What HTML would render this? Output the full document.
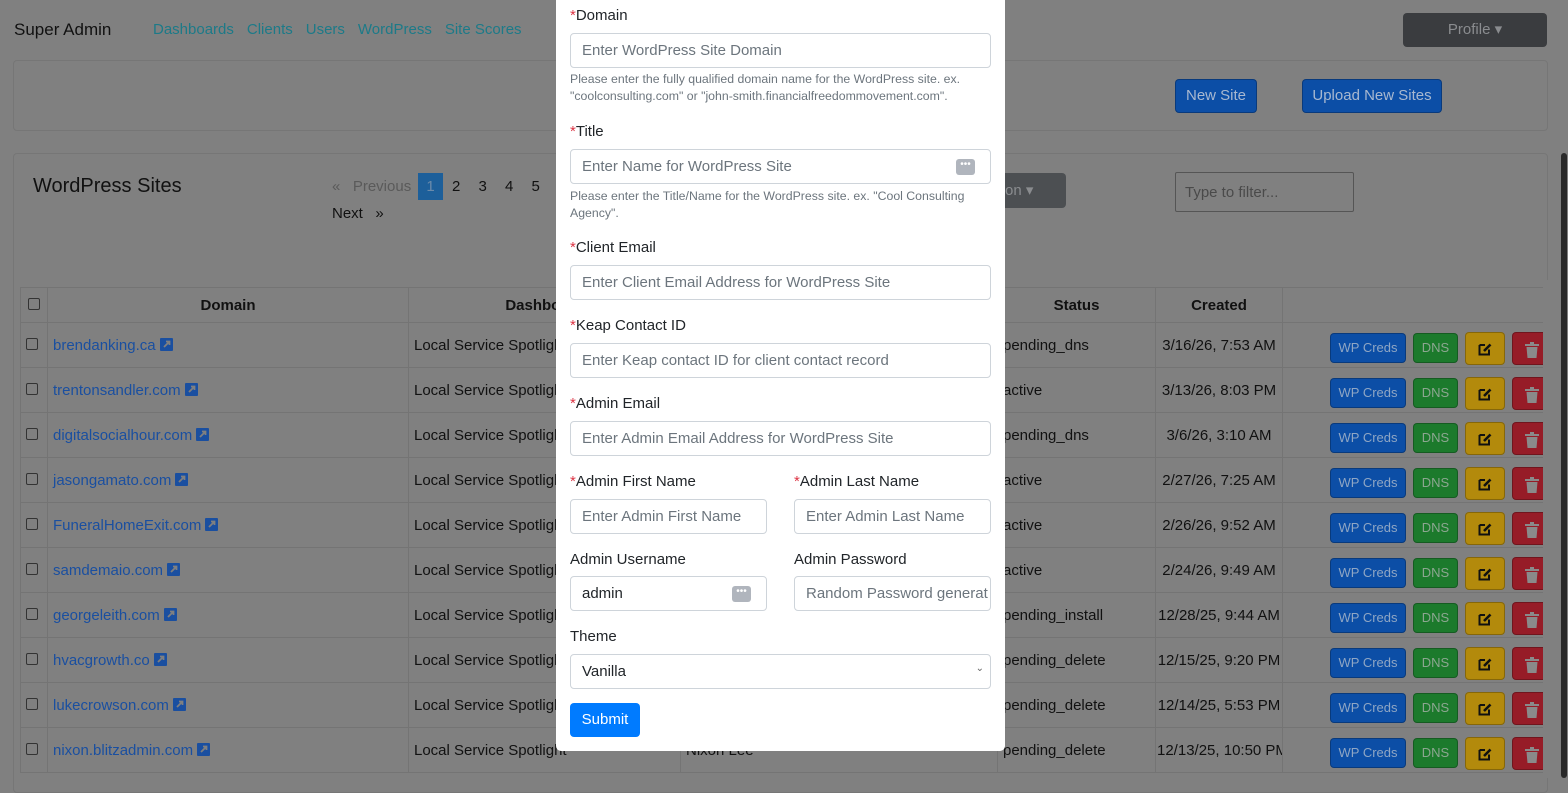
<!DOCTYPE html>
<html><head><meta charset="utf-8"><style>
*{box-sizing:border-box;margin:0;padding:0}
body{width:1568px;height:778px;overflow:hidden;background:#808080;font-family:"Liberation Sans",sans-serif;color:#111;position:relative;font-size:15px}
.a{position:absolute}
.nav a{color:#1c7a88;text-decoration:none;margin-right:13px;font-size:15px}
.box{position:absolute;border:1px solid #767676;border-radius:4px}
.btn{position:absolute;border-radius:4px;color:#8fa6c4;font-size:13px;text-align:center;border:1px solid rgba(0,0,0,.25)}
.b1{background:#0c4ea6;font-size:15px;color:#a8b8d0}
table{position:absolute;left:20px;top:287px;border-collapse:collapse;font-size:15px;table-layout:fixed;width:1523px}
td,th{border:1px solid #747474;height:45px;padding:0 5px;white-space:nowrap;overflow:hidden}
td:nth-child(6){text-align:center;padding:0 1px}
th{height:35px;font-weight:bold}
td.d a{color:#1a4fa0;text-decoration:none}
.ext{display:inline-block;width:13px;height:13px;background:#1a4fa0;vertical-align:-1px;margin-left:4px;position:relative;border-radius:1px}
.ext svg{position:absolute;left:0;top:0}
.cb{display:inline-block;width:12px;height:12px;border:1px solid #333;border-radius:2px}
.act{position:relative;overflow:visible}
.wp{left:47px;top:10px;width:76px;height:30px;line-height:28px;background:#0c4ea6;color:#8fa6c4}
.dn{left:130px;top:10px;width:45px;height:30px;line-height:28px;background:#1c7a2c;color:#8ca690}
.ed{left:182px;top:9px;width:40px;height:33px;background:#b38a0c}
.dl{left:229px;top:9px;width:40px;height:33px;background:#961c27}
.ed svg,.dl svg{position:absolute;left:12px;top:9px}
.modal{position:absolute;left:556px;top:-10px;width:449px;height:761px;background:#fff;border-radius:5px}
.m{position:absolute;color:#212529}
.lbl{font-size:15px}
.req{color:#dc3545}
.inp{position:absolute;border:1px solid #ced4da;border-radius:4px;height:35px;color:#6c757d;font-size:15px;padding:8px 11px;background:#fff}
.hlp{font-size:12.3px;color:#6c757d;line-height:17px;white-space:nowrap}
.key{position:absolute;right:15px;top:9px;width:19px;height:16px;background:#b0b5bd;border-radius:3px;color:#fff;font-size:10px;text-align:center;line-height:12px}
</style></head><body>
<div class="a" style="left:14px;top:20px;font-size:17px;color:#111">Super Admin</div>
<div class="a nav" style="left:153px;top:21px"><a>Dashboards</a><a>Clients</a><a>Users</a><a>WordPress</a><a>Site Scores</a></div>
<div class="a" style="left:1403px;top:13px;width:144px;height:34px;background:#3a3c3f;border-radius:4px;color:#8a8c8f;text-align:center;line-height:34px;font-size:15px">Profile ▾</div>
<div class="box" style="left:13px;top:60px;width:1535px;height:71px"></div>
<div class="btn b1" style="left:1175px;top:79px;width:82px;height:34px;line-height:32px">New Site</div>
<div class="btn b1" style="left:1302px;top:79px;width:140px;height:34px;line-height:32px">Upload New Sites</div>
<div class="box" style="left:13px;top:153px;width:1535px;height:640px"></div>
<div class="a" style="left:33px;top:175px;font-size:20px">WordPress Sites</div>
<div class="a" style="left:332px;top:178px;font-size:15px;color:#5a5a5a">«&nbsp;&nbsp;&nbsp;Previous</div>
<div class="a" style="left:418px;top:173px;width:25px;height:27px;background:#1d5f9a;color:#6a8aaa;text-align:center;line-height:27px">1</div>
<div class="a" style="left:452px;top:178px;word-spacing:14px">2 3 4 5</div>
<div class="a" style="left:332px;top:205px">Next&nbsp;&nbsp;&nbsp;»</div>
<div class="a" style="left:990px;top:173px;width:76px;height:35px;background:#4c4f52;border-radius:4px;color:#8a8c8f;line-height:35px;padding-left:15px">on ▾</div>
<div class="a" style="left:1175px;top:172px;width:179px;height:40px;border:1px solid #555;border-radius:2px;color:#4a4a4a;padding:11px 9px">Type to filter...</div>
<table>
<colgroup><col style="width:27px"><col style="width:361px"><col style="width:272px"><col style="width:317px"><col style="width:158px"><col style="width:127px"><col style="width:261px"></colgroup>
<tr><th><span class="cb"></span></th><th>Domain</th><th>Dashboard</th><th></th><th>Status</th><th>Created</th><th style="border-right:none"></th></tr>
<tr><td><span class="cb"></span></td><td class="d"><a>brendanking.ca</a><span class="ext"><svg width="13" height="13"><path d="M4 9 L9.5 3.5 M6 3.5 H9.5 V7" stroke="#808080" stroke-width="1.8" fill="none"/></svg></span></td><td>Local Service Spotlight</td><td></td><td>pending_dns</td><td>3/16/26, 7:53 AM</td><td class="act"><div class="btn wp">WP Creds</div><div class="btn dn">DNS</div><div class="btn ed"><svg width="15" height="14"><path d="M1.5 3 H7 M1.5 3 V12.5 H11 V7.5" stroke="#111" stroke-width="2" fill="none"/><path d="M6 9 L12.5 2.5" stroke="#111" stroke-width="2.6"/></svg></div><div class="btn dl"><svg width="14" height="16"><rect x="0" y="2" width="14" height="2" fill="#8a8a8a"/><rect x="5" y="0" width="4" height="2" fill="#8a8a8a"/><path d="M1.5 5 H12.5 L11.5 16 H2.5 Z" fill="#8a8a8a"/></svg></div></td></tr>
<tr><td><span class="cb"></span></td><td class="d"><a>trentonsandler.com</a><span class="ext"><svg width="13" height="13"><path d="M4 9 L9.5 3.5 M6 3.5 H9.5 V7" stroke="#808080" stroke-width="1.8" fill="none"/></svg></span></td><td>Local Service Spotlight</td><td></td><td>active</td><td>3/13/26, 8:03 PM</td><td class="act"><div class="btn wp">WP Creds</div><div class="btn dn">DNS</div><div class="btn ed"><svg width="15" height="14"><path d="M1.5 3 H7 M1.5 3 V12.5 H11 V7.5" stroke="#111" stroke-width="2" fill="none"/><path d="M6 9 L12.5 2.5" stroke="#111" stroke-width="2.6"/></svg></div><div class="btn dl"><svg width="14" height="16"><rect x="0" y="2" width="14" height="2" fill="#8a8a8a"/><rect x="5" y="0" width="4" height="2" fill="#8a8a8a"/><path d="M1.5 5 H12.5 L11.5 16 H2.5 Z" fill="#8a8a8a"/></svg></div></td></tr>
<tr><td><span class="cb"></span></td><td class="d"><a>digitalsocialhour.com</a><span class="ext"><svg width="13" height="13"><path d="M4 9 L9.5 3.5 M6 3.5 H9.5 V7" stroke="#808080" stroke-width="1.8" fill="none"/></svg></span></td><td>Local Service Spotlight</td><td></td><td>pending_dns</td><td>3/6/26, 3:10 AM</td><td class="act"><div class="btn wp">WP Creds</div><div class="btn dn">DNS</div><div class="btn ed"><svg width="15" height="14"><path d="M1.5 3 H7 M1.5 3 V12.5 H11 V7.5" stroke="#111" stroke-width="2" fill="none"/><path d="M6 9 L12.5 2.5" stroke="#111" stroke-width="2.6"/></svg></div><div class="btn dl"><svg width="14" height="16"><rect x="0" y="2" width="14" height="2" fill="#8a8a8a"/><rect x="5" y="0" width="4" height="2" fill="#8a8a8a"/><path d="M1.5 5 H12.5 L11.5 16 H2.5 Z" fill="#8a8a8a"/></svg></div></td></tr>
<tr><td><span class="cb"></span></td><td class="d"><a>jasongamato.com</a><span class="ext"><svg width="13" height="13"><path d="M4 9 L9.5 3.5 M6 3.5 H9.5 V7" stroke="#808080" stroke-width="1.8" fill="none"/></svg></span></td><td>Local Service Spotlight</td><td></td><td>active</td><td>2/27/26, 7:25 AM</td><td class="act"><div class="btn wp">WP Creds</div><div class="btn dn">DNS</div><div class="btn ed"><svg width="15" height="14"><path d="M1.5 3 H7 M1.5 3 V12.5 H11 V7.5" stroke="#111" stroke-width="2" fill="none"/><path d="M6 9 L12.5 2.5" stroke="#111" stroke-width="2.6"/></svg></div><div class="btn dl"><svg width="14" height="16"><rect x="0" y="2" width="14" height="2" fill="#8a8a8a"/><rect x="5" y="0" width="4" height="2" fill="#8a8a8a"/><path d="M1.5 5 H12.5 L11.5 16 H2.5 Z" fill="#8a8a8a"/></svg></div></td></tr>
<tr><td><span class="cb"></span></td><td class="d"><a>FuneralHomeExit.com</a><span class="ext"><svg width="13" height="13"><path d="M4 9 L9.5 3.5 M6 3.5 H9.5 V7" stroke="#808080" stroke-width="1.8" fill="none"/></svg></span></td><td>Local Service Spotlight</td><td></td><td>active</td><td>2/26/26, 9:52 AM</td><td class="act"><div class="btn wp">WP Creds</div><div class="btn dn">DNS</div><div class="btn ed"><svg width="15" height="14"><path d="M1.5 3 H7 M1.5 3 V12.5 H11 V7.5" stroke="#111" stroke-width="2" fill="none"/><path d="M6 9 L12.5 2.5" stroke="#111" stroke-width="2.6"/></svg></div><div class="btn dl"><svg width="14" height="16"><rect x="0" y="2" width="14" height="2" fill="#8a8a8a"/><rect x="5" y="0" width="4" height="2" fill="#8a8a8a"/><path d="M1.5 5 H12.5 L11.5 16 H2.5 Z" fill="#8a8a8a"/></svg></div></td></tr>
<tr><td><span class="cb"></span></td><td class="d"><a>samdemaio.com</a><span class="ext"><svg width="13" height="13"><path d="M4 9 L9.5 3.5 M6 3.5 H9.5 V7" stroke="#808080" stroke-width="1.8" fill="none"/></svg></span></td><td>Local Service Spotlight</td><td></td><td>active</td><td>2/24/26, 9:49 AM</td><td class="act"><div class="btn wp">WP Creds</div><div class="btn dn">DNS</div><div class="btn ed"><svg width="15" height="14"><path d="M1.5 3 H7 M1.5 3 V12.5 H11 V7.5" stroke="#111" stroke-width="2" fill="none"/><path d="M6 9 L12.5 2.5" stroke="#111" stroke-width="2.6"/></svg></div><div class="btn dl"><svg width="14" height="16"><rect x="0" y="2" width="14" height="2" fill="#8a8a8a"/><rect x="5" y="0" width="4" height="2" fill="#8a8a8a"/><path d="M1.5 5 H12.5 L11.5 16 H2.5 Z" fill="#8a8a8a"/></svg></div></td></tr>
<tr><td><span class="cb"></span></td><td class="d"><a>georgeleith.com</a><span class="ext"><svg width="13" height="13"><path d="M4 9 L9.5 3.5 M6 3.5 H9.5 V7" stroke="#808080" stroke-width="1.8" fill="none"/></svg></span></td><td>Local Service Spotlight</td><td></td><td>pending_install</td><td>12/28/25, 9:44 AM</td><td class="act"><div class="btn wp">WP Creds</div><div class="btn dn">DNS</div><div class="btn ed"><svg width="15" height="14"><path d="M1.5 3 H7 M1.5 3 V12.5 H11 V7.5" stroke="#111" stroke-width="2" fill="none"/><path d="M6 9 L12.5 2.5" stroke="#111" stroke-width="2.6"/></svg></div><div class="btn dl"><svg width="14" height="16"><rect x="0" y="2" width="14" height="2" fill="#8a8a8a"/><rect x="5" y="0" width="4" height="2" fill="#8a8a8a"/><path d="M1.5 5 H12.5 L11.5 16 H2.5 Z" fill="#8a8a8a"/></svg></div></td></tr>
<tr><td><span class="cb"></span></td><td class="d"><a>hvacgrowth.co</a><span class="ext"><svg width="13" height="13"><path d="M4 9 L9.5 3.5 M6 3.5 H9.5 V7" stroke="#808080" stroke-width="1.8" fill="none"/></svg></span></td><td>Local Service Spotlight</td><td></td><td>pending_delete</td><td>12/15/25, 9:20 PM</td><td class="act"><div class="btn wp">WP Creds</div><div class="btn dn">DNS</div><div class="btn ed"><svg width="15" height="14"><path d="M1.5 3 H7 M1.5 3 V12.5 H11 V7.5" stroke="#111" stroke-width="2" fill="none"/><path d="M6 9 L12.5 2.5" stroke="#111" stroke-width="2.6"/></svg></div><div class="btn dl"><svg width="14" height="16"><rect x="0" y="2" width="14" height="2" fill="#8a8a8a"/><rect x="5" y="0" width="4" height="2" fill="#8a8a8a"/><path d="M1.5 5 H12.5 L11.5 16 H2.5 Z" fill="#8a8a8a"/></svg></div></td></tr>
<tr><td><span class="cb"></span></td><td class="d"><a>lukecrowson.com</a><span class="ext"><svg width="13" height="13"><path d="M4 9 L9.5 3.5 M6 3.5 H9.5 V7" stroke="#808080" stroke-width="1.8" fill="none"/></svg></span></td><td>Local Service Spotlight</td><td></td><td>pending_delete</td><td>12/14/25, 5:53 PM</td><td class="act"><div class="btn wp">WP Creds</div><div class="btn dn">DNS</div><div class="btn ed"><svg width="15" height="14"><path d="M1.5 3 H7 M1.5 3 V12.5 H11 V7.5" stroke="#111" stroke-width="2" fill="none"/><path d="M6 9 L12.5 2.5" stroke="#111" stroke-width="2.6"/></svg></div><div class="btn dl"><svg width="14" height="16"><rect x="0" y="2" width="14" height="2" fill="#8a8a8a"/><rect x="5" y="0" width="4" height="2" fill="#8a8a8a"/><path d="M1.5 5 H12.5 L11.5 16 H2.5 Z" fill="#8a8a8a"/></svg></div></td></tr>
<tr><td><span class="cb"></span></td><td class="d"><a>nixon.blitzadmin.com</a><span class="ext"><svg width="13" height="13"><path d="M4 9 L9.5 3.5 M6 3.5 H9.5 V7" stroke="#808080" stroke-width="1.8" fill="none"/></svg></span></td><td>Local Service Spotlight</td><td>Nixon Lee</td><td>pending_delete</td><td>12/13/25, 10:50 PM</td><td class="act"><div class="btn wp">WP Creds</div><div class="btn dn">DNS</div><div class="btn ed"><svg width="15" height="14"><path d="M1.5 3 H7 M1.5 3 V12.5 H11 V7.5" stroke="#111" stroke-width="2" fill="none"/><path d="M6 9 L12.5 2.5" stroke="#111" stroke-width="2.6"/></svg></div><div class="btn dl"><svg width="14" height="16"><rect x="0" y="2" width="14" height="2" fill="#8a8a8a"/><rect x="5" y="0" width="4" height="2" fill="#8a8a8a"/><path d="M1.5 5 H12.5 L11.5 16 H2.5 Z" fill="#8a8a8a"/></svg></div></td></tr>
</table>
<div class="a" style="left:1543px;top:280px;width:18px;height:498px;background:#808080"></div>
<div class="a" style="left:1561px;top:153px;width:6px;height:625px;background:#2a2a2a;border-radius:3px"></div>
<div class="modal"></div>
<div class="m lbl" style="left:570px;top:7px"><span class="req">*</span>Domain</div>
<div class="inp" style="left:570px;top:33px;width:421px">Enter WordPress Site Domain</div>
<div class="m hlp" style="left:570px;top:71px">Please enter the fully qualified domain name for the WordPress site. ex.<br>"coolconsulting.com" or "john-smith.financialfreedommovement.com".</div>
<div class="m lbl" style="left:570px;top:123px"><span class="req">*</span>Title</div>
<div class="inp" style="left:570px;top:149px;width:421px">Enter Name for WordPress Site<div class="key">•••</div></div>
<div class="m hlp" style="left:570px;top:188px">Please enter the Title/Name for the WordPress site. ex. "Cool Consulting<br>Agency".</div>
<div class="m lbl" style="left:570px;top:239px"><span class="req">*</span>Client Email</div>
<div class="inp" style="left:570px;top:265px;width:421px">Enter Client Email Address for WordPress Site</div>
<div class="m lbl" style="left:570px;top:317px"><span class="req">*</span>Keap Contact ID</div>
<div class="inp" style="left:570px;top:343px;width:421px">Enter Keap contact ID for client contact record</div>
<div class="m lbl" style="left:570px;top:395px"><span class="req">*</span>Admin Email</div>
<div class="inp" style="left:570px;top:421px;width:421px">Enter Admin Email Address for WordPress Site</div>
<div class="m lbl" style="left:570px;top:473px"><span class="req">*</span>Admin First Name</div>
<div class="m lbl" style="left:794px;top:473px"><span class="req">*</span>Admin Last Name</div>
<div class="inp" style="left:570px;top:499px;width:197px">Enter Admin First Name</div>
<div class="inp" style="left:794px;top:499px;width:197px">Enter Admin Last Name</div>
<div class="m lbl" style="left:570px;top:551px">Admin Username</div>
<div class="m lbl" style="left:794px;top:551px">Admin Password</div>
<div class="inp" style="left:570px;top:576px;width:197px;color:#212529">admin<div class="key">•••</div></div>
<div class="inp" style="left:794px;top:576px;width:197px;white-space:nowrap;overflow:hidden">Random Password generat</div>
<div class="m lbl" style="left:570px;top:628px">Theme</div>
<div class="inp" style="left:570px;top:654px;width:421px;color:#212529">Vanilla<span style="position:absolute;right:6px;top:8px;font-size:10px;color:#666">⌄</span></div>
<div class="a" style="left:570px;top:703px;width:70px;height:34px;background:#007bff;border-radius:4px;color:#fff;text-align:center;line-height:34px;font-size:15px">Submit</div>
</body></html>
